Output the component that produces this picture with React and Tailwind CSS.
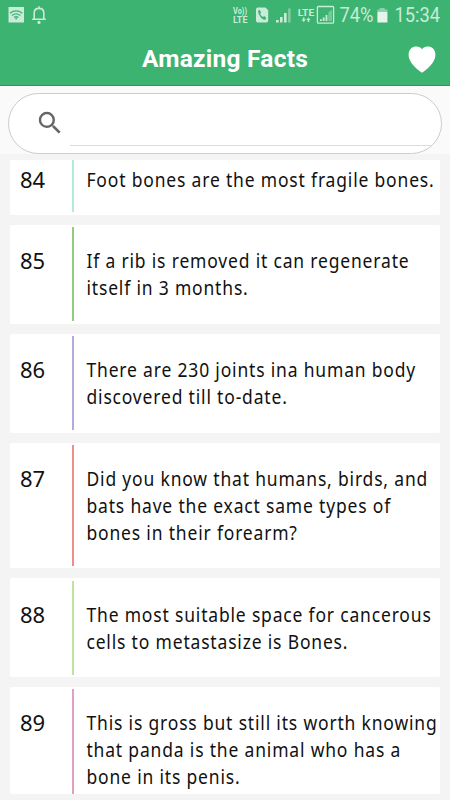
const facts = [
  { id: 84, bar: "bg-[#b0ecd6]", size: "h-[55px]", pad: "pt-[6px]", barBox: "mb-[3px]", lines: ["Foot bones are the most fragile bones."] },
  { id: 85, bar: "bg-[#93cb80]", size: "h-[99px]", pad: "pt-[22px]", barBox: "mt-[2px] mb-[3px]", lines: ["If a rib is removed it can regenerate", "itself in 3 months."] },
  { id: 86, bar: "bg-[#b5a9de]", size: "h-[99px]", pad: "pt-[22px]", barBox: "mt-[2px] mb-[3px]", lines: ["There are 230 joints ina human body", "discovered till to-date."] },
  { id: 87, bar: "bg-[#ea9088]", size: "h-[125px]", pad: "pt-[22px]", barBox: "mt-[2px] mb-[2px]", lines: ["Did you know that humans, birds, and", "bats have the exact same types of", "bones in their forearm?"] },
  { id: 88, bar: "bg-[#bfe39d]", size: "h-[99px]", pad: "pt-[23px]", barBox: "mt-[3px] mb-[2px]", lines: ["The most suitable space for cancerous", "cells to metastasize is Bones."] },
  { id: 89, bar: "bg-[#e2a0c0]", size: "h-[107px]", pad: "pt-[22px]", barBox: "mt-[2px]", lines: ["This is gross but still its worth knowing", "that panda is the animal who has a", "bone in its penis."] },
];

function StatusBar() {
  return (
    <div className="flex h-8 text-[#c9ebd8]">
      <svg className="h-8 w-[60px]" viewBox="0 0 60 32" fill="none">
        <path d="M8.5 7h15.5v15.5H8.5z" fill="currentColor" />
        <g stroke="#3cb371" strokeWidth="1.3">
          <path d="M10 13.2q6.2-4.6 12.4 0M12 15.4q4.2-3.2 8.4 0M14 17.4q2.2-1.7 4.4 0" />
        </g>
        <circle cx="16.2" cy="18.6" r="1" fill="#3cb371" />
        <path d="M32.2 19.3h13.6M34.2 18.8V13c0-3 1.8-4.6 4.8-4.6s4.8 1.6 4.8 4.6v5.8M39 6.2v2" stroke="currentColor" strokeWidth="1.6" />
        <circle cx="39" cy="22.4" r="1.6" fill="currentColor" />
      </svg>
      <svg className="ml-auto h-8 w-[225px]" viewBox="225 0 225 32" fill="currentColor">
        <g fontFamily="Roboto, sans-serif" fontWeight="700">
          <text x="233" y="14" fontSize="8.5" textLength="14" lengthAdjust="spacingAndGlyphs">Vo))</text>
          <text x="233" y="22.5" fontSize="8.5" textLength="14.5" lengthAdjust="spacingAndGlyphs">LTE</text>
          <text x="297.7" y="15.5" fontSize="9.5" textLength="16.5" lengthAdjust="spacingAndGlyphs">LTE</text>
        </g>
        <path d="M258 7.5h7.5l2.7 2.7v10.6q0 1.8-1.8 1.8h-8.6q-1.8 0-1.8-1.8V9.3q0-1.8 2-1.8z" />
        <path d="M258 10.5l1.7-.5 1.4 2.5-1 1.2q1 2.2 2.8 3.2l1.3-1 2 1.8-.7 1.7q-2 1-4.5-1.6-3-3-3-7.3z" fill="#3cb371" />
        <path d="M276 20h2.7v2.5H276zM280 17h2.6v5.5H280zM284 13h2.6v9.5H284z" />
        <path d="M288 8.5h2.7v14H288z" opacity=".45" />
        <path d="M303 17.5h1.5v2h1.4l-2.2 2.5-2.2-2.5h1.5zM307.7 22h1.5v-2h1.4l-2.2-2.5-2.2 2.5h1.5z" />
        <rect x="317.4" y="6.5" width="16.2" height="16.7" rx="1" fill="none" stroke="currentColor" strokeWidth="1.3" />
        <path d="M320 19.3h1.8V21H320zM322.8 17.5h1.8V21h-1.8zM325.6 15h1.8v6h-1.8z" />
        <path d="M328.3 12.5l3.7-3V21h-3.7z" opacity=".4" />
        <g fontFamily="Roboto, sans-serif" fontSize="19.5">
          <text x="339.5" y="22.3" textLength="34" lengthAdjust="spacingAndGlyphs">74%</text>
          <text x="394.5" y="22.3" textLength="45.5" lengthAdjust="spacingAndGlyphs">15:34</text>
        </g>
        <path d="M379.7 8h5v1.5h2.7V12h-10V9.5h2.3z" opacity=".55" />
        <path d="M377.4 12h10v10.5h-10z" fill="#e4f6ec" />
      </svg>
    </div>
  );
}

function FactCard({ fact }) {
  return (
    <div className={`flex w-[430px] shrink-0 overflow-hidden rounded-[2px] bg-white ${fact.size}`}>
      <div className={`w-[62px] shrink-0 pl-[10px] text-[22px] leading-[27px] ${fact.pad}`}>{fact.id}</div>
      <div className={`w-[2px] shrink-0 ${fact.bar} ${fact.barBox}`} />
      <div className={`ml-[12px] mt-px w-[354px] shrink-0 ${fact.pad}`}>
        {fact.lines.map((line) => (
          <p key={line} className="w-max origin-left scale-x-[0.92] whitespace-nowrap pl-[0.5px] text-[19px] leading-[27px] tracking-[0.9px]">{line}</p>
        ))}
      </div>
    </div>
  );
}

export default function App() {
  return (
    <div className="flex h-[800px] w-[450px] flex-col overflow-hidden bg-[#f4f4f4] font-['Noto_Sans',sans-serif] text-[#111]">
      {/* Header */}
      <header className="h-[86px] shrink-0 border-b border-[#08aa58] bg-[#3cb371]">
        <StatusBar />
        <div className="grid h-[54px] grid-cols-[60px_1fr_60px] items-center">
          <span />
          <h1 className="text-center font-['Roboto',sans-serif] text-[24.5px] font-bold leading-[54px] tracking-[0.25px] text-white">Amazing Facts</h1>
          <svg className="ml-[18px] mt-[1px] h-[27px] w-[28px]" viewBox="0 0 28 27" fill="white">
            <path d="M14 3.2C11.7-.2 6-.1 3 2.5.4 5.1-.1 9.4 1.5 13.2 3.7 18.6 9 23.3 14 26.7c5-3.4 10.3-8.1 12.5-13.5 1.6-3.8 1.1-8.1-1.5-10.7-3-2.6-8.7-2.7-11 .7z" />
          </svg>
        </div>
      </header>

      {/* Search */}
      <div className="h-[68px] shrink-0 bg-[#fafafa] pl-[8px] pt-[7px]">
        <div className="flex h-[61px] w-[434px] overflow-hidden rounded-full border border-[#ccc] bg-white">
          <svg className="ml-[26px] mt-[14px] h-[30px] w-[30px]" viewBox="0 0 24 24" fill="#666">
            <path d="M15.5 14h-.79l-.28-.27A6.47 6.47 0 0 0 16 9.5 6.5 6.5 0 1 0 9.5 16c1.61 0 3.09-.59 4.23-1.57l.27.28v.79l5 4.99L20.49 19l-4.99-5zm-6 0C7.01 14 5 11.99 5 9.5S7.01 5 9.5 5 14 7.01 14 9.5 11.99 14 9.5 14z" />
          </svg>
          <div className="ml-[5px] h-[52px] w-[361px] border-b border-[#ddd]" />
        </div>
      </div>

      {/* Facts */}
      <main className="flex flex-col gap-[10px] pl-[10px] pt-[6px]">
        {facts.map((fact) => (
          <FactCard key={fact.id} fact={fact} />
        ))}
      </main>
    </div>
  );
}
